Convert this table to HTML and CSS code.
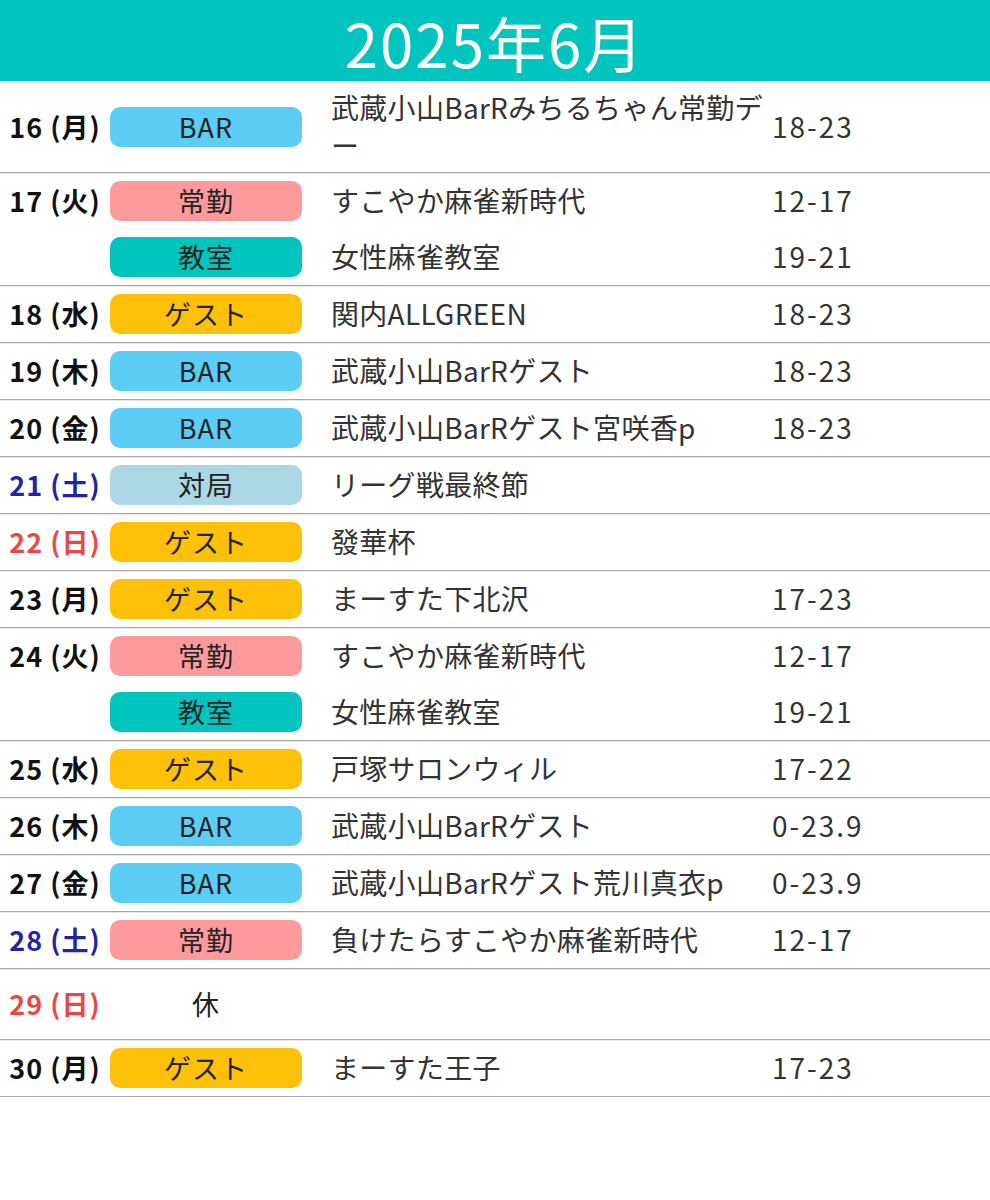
FILE: index.html
```html
<!DOCTYPE html>
<html lang="ja">
<head>
<meta charset="utf-8">
<title>2025年6月</title>
<link rel="stylesheet" href="styles.css">
</head>
<body>
<header class="title">2025年6月</header>
<main class="list">
  <div class="day">
    <div class="date">16 (月)</div>
    <div class="event"><span class="pill bar">BAR</span><span class="desc">武蔵小山BarRみちるちゃん常勤デー</span><span class="time">18-23</span></div>
  </div>
  <div class="day">
    <div class="date">17 (火)</div>
    <div class="event"><span class="pill regular">常勤</span><span class="desc">すこやか麻雀新時代</span><span class="time">12-17</span></div>
    <div class="event"><span class="pill lesson">教室</span><span class="desc">女性麻雀教室</span><span class="time">19-21</span></div>
  </div>
  <div class="day">
    <div class="date">18 (水)</div>
    <div class="event"><span class="pill guest">ゲスト</span><span class="desc">関内ALLGREEN</span><span class="time">18-23</span></div>
  </div>
  <div class="day">
    <div class="date">19 (木)</div>
    <div class="event"><span class="pill bar">BAR</span><span class="desc">武蔵小山BarRゲスト</span><span class="time">18-23</span></div>
  </div>
  <div class="day">
    <div class="date">20 (金)</div>
    <div class="event"><span class="pill bar">BAR</span><span class="desc">武蔵小山BarRゲスト宮咲香p</span><span class="time">18-23</span></div>
  </div>
  <div class="day">
    <div class="date sat">21 (土)</div>
    <div class="event"><span class="pill match">対局</span><span class="desc">リーグ戦最終節</span><span class="time"></span></div>
  </div>
  <div class="day">
    <div class="date sun">22 (日)</div>
    <div class="event"><span class="pill guest">ゲスト</span><span class="desc">發華杯</span><span class="time"></span></div>
  </div>
  <div class="day">
    <div class="date">23 (月)</div>
    <div class="event"><span class="pill guest">ゲスト</span><span class="desc">まーすた下北沢</span><span class="time">17-23</span></div>
  </div>
  <div class="day">
    <div class="date">24 (火)</div>
    <div class="event"><span class="pill regular">常勤</span><span class="desc">すこやか麻雀新時代</span><span class="time">12-17</span></div>
    <div class="event"><span class="pill lesson">教室</span><span class="desc">女性麻雀教室</span><span class="time">19-21</span></div>
  </div>
  <div class="day">
    <div class="date">25 (水)</div>
    <div class="event"><span class="pill guest">ゲスト</span><span class="desc">戸塚サロンウィル</span><span class="time">17-22</span></div>
  </div>
  <div class="day">
    <div class="date">26 (木)</div>
    <div class="event"><span class="pill bar">BAR</span><span class="desc">武蔵小山BarRゲスト</span><span class="time">0-23.9</span></div>
  </div>
  <div class="day">
    <div class="date">27 (金)</div>
    <div class="event"><span class="pill bar">BAR</span><span class="desc">武蔵小山BarRゲスト荒川真衣p</span><span class="time">0-23.9</span></div>
  </div>
  <div class="day">
    <div class="date sat">28 (土)</div>
    <div class="event"><span class="pill regular">常勤</span><span class="desc">負けたらすこやか麻雀新時代</span><span class="time">12-17</span></div>
  </div>
  <div class="day">
    <div class="date sun">29 (日)</div>
    <div class="event holiday"><span class="pill off">休</span><span class="desc"></span><span class="time"></span></div>
  </div>
  <div class="day">
    <div class="date">30 (月)</div>
    <div class="event"><span class="pill guest">ゲスト</span><span class="desc">まーすた王子</span><span class="time">17-23</span></div>
  </div>
</main>
</body>
</html>
```

FILE: styles.css
```css
html, body {
  margin: 0;
  padding: 0;
  background: #ffffff;
}

body {
  font-family: "Noto Sans CJK JP", "Noto Sans", sans-serif;
  color: #333333;
}

.title {
  height: 81px;
  background: #00c4be;
  color: #ffffff;
  font-size: 60px;
  font-weight: 400;
  line-height: 84px;
  text-align: center;
  letter-spacing: 2px;
}

.list {
  display: flex;
  flex-direction: column;
}

.day {
  display: grid;
  grid-template-columns: 110px 1fr;
  border-bottom: 1px solid #a9a9a9;
  box-shadow: 0 1px 0 #e8e8e8;
}

.date {
  grid-column: 1;
  grid-row: 1;
  align-self: center;
  text-align: center;
  font-size: 27px;
  font-weight: 700;
  color: #111111;
  line-height: 36px;
  letter-spacing: 1px;
  white-space: nowrap;
}

.date.sat {
  color: #2323a8;
}

.date.sun {
  color: #e84848;
}

.event {
  grid-column: 2;
  display: grid;
  grid-template-columns: 192px 470px 1fr;
  align-items: center;
  padding: 8px 0;
  min-height: 40px;
}

.event.holiday {
  padding: 15px 0;
}

.pill {
  height: 40px;
  border-radius: 10px;
  display: flex;
  align-items: center;
  justify-content: center;
  font-size: 27px;
  color: #222222;
  line-height: 40px;
  letter-spacing: 1px;
}

.pill.bar {
  background: #5ccdf5;
}

.pill.regular {
  background: #ff9a9c;
}

.pill.lesson {
  background: #00c4be;
}

.pill.guest {
  background: #ffc107;
}

.pill.match {
  background: #acd7e5;
}

.pill.off {
  background: transparent;
}

.desc {
  padding-left: 29px;
  font-size: 28px;
  line-height: 37.5px;
  letter-spacing: 0.3px;
  color: #333333;
}

.time {
  font-size: 28px;
  line-height: 37.5px;
  letter-spacing: 2px;
  color: #333333;
}
```
